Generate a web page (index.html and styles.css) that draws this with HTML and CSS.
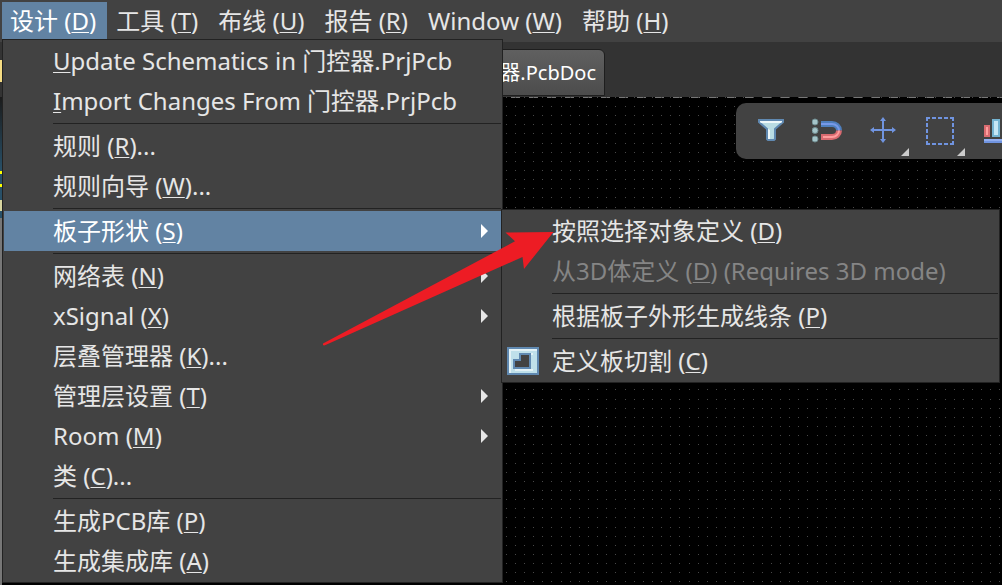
FILE: index.html
```html
<!DOCTYPE html>
<html lang="zh-CN">
<head>
<meta charset="utf-8">
<meta name="viewport" content="width=device-width, initial-scale=1">
<title>PCB</title>
<link rel="stylesheet" href="styles.css">
</head>
<body>
<div class="app">
  <nav class="menubar">
    <div class="menubar-entry">
      <button class="menubar-item is-open" type="button" aria-haspopup="true" aria-expanded="true">设计 (<u>D</u>)</button>
      <ul class="menu menu-main">
        <li><button class="menu-item" type="button"><span><u>U</u>pdate Schematics in 门控器.PrjPcb</span></button></li>
        <li><button class="menu-item" type="button"><span><u>I</u>mport Changes From 门控器.PrjPcb</span></button></li>
        <li class="separator" role="separator"></li>
        <li><button class="menu-item" type="button"><span>规则 (<u>R</u>)...</span></button></li>
        <li><button class="menu-item" type="button"><span>规则向导 (<u>W</u>)...</span></button></li>
        <li class="separator" role="separator"></li>
        <li class="has-submenu">
          <button class="menu-item is-active parent" type="button" aria-haspopup="true" aria-expanded="true"><span>板子形状 (<u>S</u>)</span></button>
          <ul class="menu menu-sub">
            <li><button class="menu-item" type="button"><span>按照选择对象定义 (<u>D</u>)</span></button></li>
            <li><button class="menu-item" type="button" disabled><span>从3D体定义 (<u>D</u>) (Requires 3D mode)</span></button></li>
            <li class="separator" role="separator"></li>
            <li><button class="menu-item" type="button"><span>根据板子外形生成线条 (<u>P</u>)</span></button></li>
            <li class="separator" role="separator"></li>
            <li><button class="menu-item with-icon" type="button">
              <svg class="cutout-icon" width="32" height="28" viewBox="0 0 32 28" shape-rendering="crispEdges" aria-hidden="true">
                <path fill="#6089b1" d="M0 0h32v28H0z"/>
                <path fill="#e3f2f6" d="M2 2h28v24H2z"/>
                <path fill="#bfe0ea" d="M4 4h26v22H4z"/>
                <path fill="#e3f2f6" d="M8 22h18V8h-2V6h2v18H8z"/>
                <path fill="#6089b1" d="M12 6h12v16H6V12h6z"/>
                <path fill="#424242" d="M14 8h8v12H8v-6h6z"/>
              </svg>
              <span>定义板切割 (<u>C</u>)</span></button></li>
          </ul>
        </li>
        <li class="separator" role="separator"></li>
        <li><button class="menu-item parent" type="button"><span>网络表 (<u>N</u>)</span></button></li>
        <li><button class="menu-item parent" type="button"><span>xSignal (<u>X</u>)</span></button></li>
        <li><button class="menu-item" type="button"><span>层叠管理器 (<u>K</u>)...</span></button></li>
        <li><button class="menu-item parent" type="button"><span>管理层设置 (<u>T</u>)</span></button></li>
        <li><button class="menu-item parent" type="button"><span>Room (<u>M</u>)</span></button></li>
        <li><button class="menu-item" type="button"><span>类 (<u>C</u>)...</span></button></li>
        <li class="separator" role="separator"></li>
        <li><button class="menu-item" type="button"><span>生成PCB库 (<u>P</u>)</span></button></li>
        <li><button class="menu-item" type="button"><span>生成集成库 (<u>A</u>)</span></button></li>
      </ul>
    </div>
    <button class="menubar-item" type="button">工具 (<u>T</u>)</button>
    <button class="menubar-item" type="button">布线 (<u>U</u>)</button>
    <button class="menubar-item" type="button">报告 (<u>R</u>)</button>
    <button class="menubar-item" type="button">Window (<u>W</u>)</button>
    <button class="menubar-item" type="button">帮助 (<u>H</u>)</button>
  </nav>

  <div class="tabs">
    <button class="tab" type="button">器.PcbDoc</button>
  </div>

  <main class="workspace">
    <div class="side-panel"></div>
    <div class="canvas">
      <svg class="grid" width="100%" height="100%" shape-rendering="crispEdges" aria-hidden="true">
        <defs>
          <pattern id="dots" width="64" height="64" x="47" y="46" patternUnits="userSpaceOnUse">
            <g fill="none" stroke="#484848">
              <path id="line" stroke-width="1" d="M0 .5h1M9 .5h1M18 .5h1M27 .5h1M36 .5h1M45 .5h1M54 .5h1"/>
              <use href="#line" y="9"/><use href="#line" y="18"/><use href="#line" y="27"/>
              <use href="#line" y="36"/><use href="#line" y="45"/><use href="#line" y="54"/>
            </g>
          </pattern>
        </defs>
        <rect width="100%" height="100%" fill="url(#dots)"/>
      </svg>
      <div class="toolbar">
        <button class="tool" type="button" aria-label="Filter">
          <svg width="28" height="28" viewBox="0 0 28 28" aria-hidden="true">
            <path fill="#b9dce3" stroke="#6089b1" stroke-width="2" d="M2 3h24v2l-8 7v10l-1 1h-6l-1-1V12L2 5z"/>
            <path fill="#eef8fa" d="M3 4h22v1l-1 1H4L3 5zM11 12l2 1v9h-2z"/>
          </svg>
        </button>
        <button class="tool" type="button" aria-label="Snap">
          <svg width="30" height="28" viewBox="0 0 30 28" aria-hidden="true">
            <g fill="#a5c5ca" stroke="#6f8c90"><circle cx="3" cy="5" r="3"/><circle cx="3" cy="13.500" r="3"/><circle cx="3" cy="22" r="3"/></g>
            <path fill="none" stroke="#4f7fbd" stroke-width="6" d="M9 7h11c4 0 7 3 7 6.500"/>
            <path fill="none" stroke="#d96b70" stroke-width="6" d="M9 20h11c4 0 7-3 7-6.500"/>
            <path fill="none" stroke="#7799e8" stroke-width="2" d="M9 7h11c4 0 7 3 7 6.500"/>
            <path fill="none" stroke="#ff9d9d" stroke-width="2" d="M11 20h9c4 0 7-3 7-6.500"/>
          </svg>
        </button>
        <button class="tool has-more" type="button" aria-label="Move">
          <svg width="28" height="28" viewBox="0 0 28 28" aria-hidden="true">
            <path fill="none" stroke="#7094e0" stroke-width="2" d="M14 3v20M4 13h20"/>
            <path fill="#7094e0" d="M14 0l3 4h-6zM14 26l3-4h-6zM1 13l4-3v6zM27 13l-4-3v6z"/>
          </svg>
        </button>
        <button class="tool has-more" type="button" aria-label="Select">
          <svg width="30" height="28" viewBox="0 0 30 28" shape-rendering="crispEdges" aria-hidden="true">
            <path fill="none" stroke="#7094e0" stroke-width="2" stroke-dasharray="4 2" d="M2 1h28M2 27h28M3 0v28M29 0v28"/>
          </svg>
        </button>
        <button class="tool" type="button" aria-label="Align">
          <svg width="24" height="28" viewBox="0 0 24 28" shape-rendering="crispEdges" aria-hidden="true">
            <path fill="#ff9d9d" stroke="#d96b70" stroke-width="2" d="M2 9h4v10H2z"/>
            <path fill="#c5e7f5" stroke="#74b4d2" stroke-width="2" d="M10 3h6v16h-6z"/>
            <path fill="#ff9d9d" stroke="#d96b70" stroke-width="2" d="M20 6h3v13h-3z"/>
            <path fill="#7094e0" d="M1 22h23v4H1z"/>
            <path fill="#91aef0" d="M1 22h23v2H1z"/>
          </svg>
        </button>
      </div>
    </div>
  </main>
  <svg class="arrow" width="232" height="116" viewBox="322 231 232 116" aria-hidden="true">
    <path fill="#ed1c24" d="M323 343.500L515 241.300 505.500 232.500 553.500 232 524 269 522.500 257 325 345.300Q322.500 346 323 343.500z"/>
  </svg>
</div>
</body>
</html>
```
FILE: styles.css
```css
* {
  box-sizing: border-box;
}

body {
  margin: 0;
  background: #000;
  color: #e6e6e6;
  font-family: "Noto Sans", "Noto Sans CJK SC", sans-serif;
  font-size: 24px;
  line-height: 36px;
}

button {
  margin: 0;
  padding: 0;
  border: 0;
  background: none;
  color: inherit;
  font: inherit;
  text-align: left;
  white-space: nowrap;
}

ul {
  margin: 0;
  padding: 0;
  list-style: none;
}

u {
  text-decoration-thickness: 1px;
  text-underline-offset: 2px;
}

.app {
  position: relative;
  display: flex;
  flex-direction: column;
  min-height: 100vh;
  overflow: hidden;
}

.menubar {
  display: flex;
  gap: 1px;
  padding: 2px 2px 3px;
  background: #424242;
}

.menubar-entry {
  position: relative;
}

.menubar-item {
  display: block;
  height: 37px;
  padding: 0 11px 0 8px;
}

.menubar-item.is-open {
  background: #6283a3;
  color: #fff;
}

.menu {
  position: absolute;
  z-index: 2;
  padding: 1px;
  border: 1px solid #222;
  background: #424242;
}

.menu-main {
  top: 100%;
  left: 0;
  width: 501px;
}

.menu-sub {
  top: -2px;
  left: 100%;
  width: 499px;
}

.has-submenu {
  position: relative;
}

.menu-item {
  display: flex;
  align-items: center;
  width: 100%;
  height: 40px;
  padding: 0 13px 0 49px;
}

.menu-item.is-active {
  background: #6283a3;
  color: #fff;
}

.menu-item:disabled {
  color: #858585;
}

.menu-item.with-icon {
  gap: 13px;
  padding-left: 4px;
}

.menu-item.parent::after {
  content: "";
  margin-left: auto;
  border-left: 7px solid currentColor;
  border-top: 7px solid transparent;
  border-bottom: 7px solid transparent;
}

.separator {
  height: 5px;
  margin: 0 0 0 49px;
  padding: 2px 0;
  background: #222;
  background-clip: content-box;
}

.tabs {
  display: flex;
  height: 55px;
  padding: 7px 0 1px 460px;
  background: linear-gradient(#333 18px, #f5dc83 18px, #f5dc83 40px, #333 40px) 0 0 / 2px 100% no-repeat #333;
}

.tab {
  min-width: 145px;
  padding: 0 8px;
  border: 1px solid #1e1e1e;
  border-radius: 6px 6px 0 0;
  background: linear-gradient(#606060, #4c4c4c);
  color: #fff;
  font-size: 20px;
  text-align: right;
}

.workspace {
  display: flex;
  flex: 1;
}

.side-panel {
  width: 2px;
  background: linear-gradient(#1b1b1b, #285068 74px, #ff0 74px, #ff0 77px, #285068 77px, #285068 87px, #ff0 87px, #ff0 90px, #285068 90px, #285068 103px, #d8d5a0 103px, #d8d5a0 114px, #285068 114px, #285068 121px, #777 121px);
}

.canvas {
  position: relative;
  flex: 1;
  padding-top: 6px;
  background: repeating-linear-gradient(90deg, transparent 0 5px, #777 5px 14px, transparent 14px 18px) 0 0 / 100% 1px no-repeat #000;
}

.grid {
  position: absolute;
  inset: 0;
}

.toolbar {
  position: relative;
  display: flex;
  width: 287px;
  height: 56px;
  margin: 0 -21px 0 auto;
  padding: 0 0 0 7px;
  border-radius: 10px 0 0 10px;
  background: #424242;
}

.tool {
  position: relative;
  display: flex;
  flex: 0 0 56px;
  align-items: center;
  justify-content: center;
}

.tool.has-more::after {
  content: "";
  position: absolute;
  right: 2px;
  bottom: 3px;
  border-bottom: 8px solid #ccc;
  border-left: 8px solid transparent;
}

.arrow {
  position: absolute;
  z-index: 3;
  top: 231px;
  left: 322px;
  pointer-events: none;
}
```
